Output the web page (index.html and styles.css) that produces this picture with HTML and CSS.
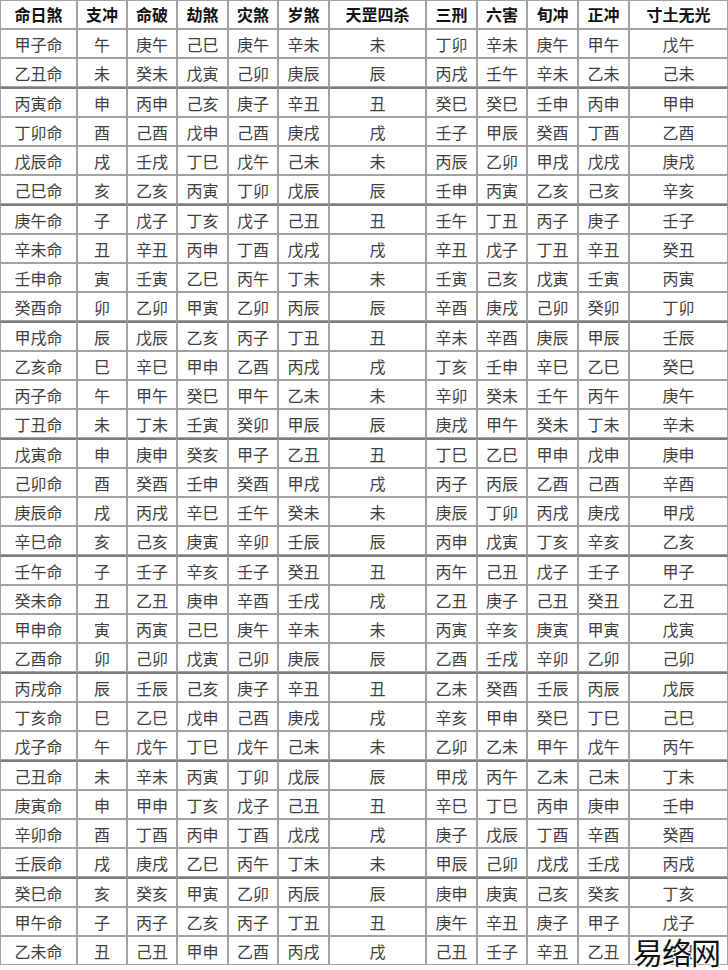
FILE: index.html
```html
<!DOCTYPE html>
<html lang="zh-CN">
<head>
<meta charset="utf-8">
<title>命日煞</title>
<link rel="stylesheet" href="styles.css">
</head>
<body>
<div class="wrap">
<table class="sha">
<colgroup>
<col class="c1"><col class="c2"><col class="c3"><col class="c4"><col class="c5"><col class="c6"><col class="c7"><col class="c8"><col class="c9"><col class="c10"><col class="c11"><col class="c12">
</colgroup>
<thead>
<tr><th>命日煞</th><th>支冲</th><th>命破</th><th>劫煞</th><th>灾煞</th><th>岁煞</th><th>天罡四杀</th><th>三刑</th><th>六害</th><th>旬冲</th><th>正冲</th><th>寸土无光</th></tr>
</thead>
<tbody>
<tr><td>甲子命</td><td>午</td><td>庚午</td><td>己巳</td><td>庚午</td><td>辛未</td><td>未</td><td>丁卯</td><td>辛未</td><td>庚午</td><td>甲午</td><td>戊午</td></tr>
<tr><td>乙丑命</td><td>未</td><td>癸未</td><td>戊寅</td><td>己卯</td><td>庚辰</td><td>辰</td><td>丙戌</td><td>壬午</td><td>辛未</td><td>乙未</td><td>己未</td></tr>
<tr class="sep"><td>丙寅命</td><td>申</td><td>丙申</td><td>己亥</td><td>庚子</td><td>辛丑</td><td>丑</td><td>癸巳</td><td>癸巳</td><td>壬申</td><td>丙申</td><td>甲申</td></tr>
<tr><td>丁卯命</td><td>酉</td><td>己酉</td><td>戊申</td><td>己酉</td><td>庚戌</td><td>戌</td><td>壬子</td><td>甲辰</td><td>癸酉</td><td>丁酉</td><td>乙酉</td></tr>
<tr><td>戊辰命</td><td>戌</td><td>壬戌</td><td>丁巳</td><td>戊午</td><td>己未</td><td>未</td><td>丙辰</td><td>乙卯</td><td>甲戌</td><td>戊戌</td><td>庚戌</td></tr>
<tr><td>己巳命</td><td>亥</td><td>乙亥</td><td>丙寅</td><td>丁卯</td><td>戊辰</td><td>辰</td><td>壬申</td><td>丙寅</td><td>乙亥</td><td>己亥</td><td>辛亥</td></tr>
<tr class="sep"><td>庚午命</td><td>子</td><td>戊子</td><td>丁亥</td><td>戊子</td><td>己丑</td><td>丑</td><td>壬午</td><td>丁丑</td><td>丙子</td><td>庚子</td><td>壬子</td></tr>
<tr><td>辛未命</td><td>丑</td><td>辛丑</td><td>丙申</td><td>丁酉</td><td>戊戌</td><td>戌</td><td>辛丑</td><td>戊子</td><td>丁丑</td><td>辛丑</td><td>癸丑</td></tr>
<tr><td>壬申命</td><td>寅</td><td>壬寅</td><td>乙巳</td><td>丙午</td><td>丁未</td><td>未</td><td>壬寅</td><td>己亥</td><td>戊寅</td><td>壬寅</td><td>丙寅</td></tr>
<tr><td>癸酉命</td><td>卯</td><td>乙卯</td><td>甲寅</td><td>乙卯</td><td>丙辰</td><td>辰</td><td>辛酉</td><td>庚戌</td><td>己卯</td><td>癸卯</td><td>丁卯</td></tr>
<tr class="sep"><td>甲戌命</td><td>辰</td><td>戊辰</td><td>乙亥</td><td>丙子</td><td>丁丑</td><td>丑</td><td>辛未</td><td>辛酉</td><td>庚辰</td><td>甲辰</td><td>壬辰</td></tr>
<tr><td>乙亥命</td><td>巳</td><td>辛巳</td><td>甲申</td><td>乙酉</td><td>丙戌</td><td>戌</td><td>丁亥</td><td>壬申</td><td>辛巳</td><td>乙巳</td><td>癸巳</td></tr>
<tr><td>丙子命</td><td>午</td><td>甲午</td><td>癸巳</td><td>甲午</td><td>乙未</td><td>未</td><td>辛卯</td><td>癸未</td><td>壬午</td><td>丙午</td><td>庚午</td></tr>
<tr><td>丁丑命</td><td>未</td><td>丁未</td><td>壬寅</td><td>癸卯</td><td>甲辰</td><td>辰</td><td>庚戌</td><td>甲午</td><td>癸未</td><td>丁未</td><td>辛未</td></tr>
<tr class="sep"><td>戊寅命</td><td>申</td><td>庚申</td><td>癸亥</td><td>甲子</td><td>乙丑</td><td>丑</td><td>丁巳</td><td>乙巳</td><td>甲申</td><td>戊申</td><td>庚申</td></tr>
<tr><td>己卯命</td><td>酉</td><td>癸酉</td><td>壬申</td><td>癸酉</td><td>甲戌</td><td>戌</td><td>丙子</td><td>丙辰</td><td>乙酉</td><td>己酉</td><td>辛酉</td></tr>
<tr><td>庚辰命</td><td>戌</td><td>丙戌</td><td>辛巳</td><td>壬午</td><td>癸未</td><td>未</td><td>庚辰</td><td>丁卯</td><td>丙戌</td><td>庚戌</td><td>甲戌</td></tr>
<tr><td>辛巳命</td><td>亥</td><td>己亥</td><td>庚寅</td><td>辛卯</td><td>壬辰</td><td>辰</td><td>丙申</td><td>戊寅</td><td>丁亥</td><td>辛亥</td><td>乙亥</td></tr>
<tr class="sep"><td>壬午命</td><td>子</td><td>壬子</td><td>辛亥</td><td>壬子</td><td>癸丑</td><td>丑</td><td>丙午</td><td>己丑</td><td>戊子</td><td>壬子</td><td>甲子</td></tr>
<tr><td>癸未命</td><td>丑</td><td>乙丑</td><td>庚申</td><td>辛酉</td><td>壬戌</td><td>戌</td><td>乙丑</td><td>庚子</td><td>己丑</td><td>癸丑</td><td>乙丑</td></tr>
<tr><td>甲申命</td><td>寅</td><td>丙寅</td><td>己巳</td><td>庚午</td><td>辛未</td><td>未</td><td>丙寅</td><td>辛亥</td><td>庚寅</td><td>甲寅</td><td>戊寅</td></tr>
<tr><td>乙酉命</td><td>卯</td><td>己卯</td><td>戊寅</td><td>己卯</td><td>庚辰</td><td>辰</td><td>乙酉</td><td>壬戌</td><td>辛卯</td><td>乙卯</td><td>己卯</td></tr>
<tr class="sep"><td>丙戌命</td><td>辰</td><td>壬辰</td><td>己亥</td><td>庚子</td><td>辛丑</td><td>丑</td><td>乙未</td><td>癸酉</td><td>壬辰</td><td>丙辰</td><td>戊辰</td></tr>
<tr><td>丁亥命</td><td>巳</td><td>乙巳</td><td>戊申</td><td>己酉</td><td>庚戌</td><td>戌</td><td>辛亥</td><td>甲申</td><td>癸巳</td><td>丁巳</td><td>己巳</td></tr>
<tr><td>戊子命</td><td>午</td><td>戊午</td><td>丁巳</td><td>戊午</td><td>己未</td><td>未</td><td>乙卯</td><td>乙未</td><td>甲午</td><td>戊午</td><td>丙午</td></tr>
<tr class="sep"><td>己丑命</td><td>未</td><td>辛未</td><td>丙寅</td><td>丁卯</td><td>戊辰</td><td>辰</td><td>甲戌</td><td>丙午</td><td>乙未</td><td>己未</td><td>丁未</td></tr>
<tr><td>庚寅命</td><td>申</td><td>甲申</td><td>丁亥</td><td>戊子</td><td>己丑</td><td>丑</td><td>辛巳</td><td>丁巳</td><td>丙申</td><td>庚申</td><td>壬申</td></tr>
<tr><td>辛卯命</td><td>酉</td><td>丁酉</td><td>丙申</td><td>丁酉</td><td>戊戌</td><td>戌</td><td>庚子</td><td>戊辰</td><td>丁酉</td><td>辛酉</td><td>癸酉</td></tr>
<tr><td>壬辰命</td><td>戌</td><td>庚戌</td><td>乙巳</td><td>丙午</td><td>丁未</td><td>未</td><td>甲辰</td><td>己卯</td><td>戊戌</td><td>壬戌</td><td>丙戌</td></tr>
<tr class="sep"><td>癸巳命</td><td>亥</td><td>癸亥</td><td>甲寅</td><td>乙卯</td><td>丙辰</td><td>辰</td><td>庚申</td><td>庚寅</td><td>己亥</td><td>癸亥</td><td>丁亥</td></tr>
<tr><td>甲午命</td><td>子</td><td>丙子</td><td>乙亥</td><td>丙子</td><td>丁丑</td><td>丑</td><td>庚午</td><td>辛丑</td><td>庚子</td><td>甲子</td><td>戊子</td></tr>
<tr><td>乙未命</td><td>丑</td><td>己丑</td><td>甲申</td><td>乙酉</td><td>丙戌</td><td>戌</td><td>己丑</td><td>壬子</td><td>辛丑</td><td>乙丑</td><td>己丑</td></tr>
</tbody>
</table>
<div class="mark">易络网</div>
</div>
</body>
</html>
```
FILE: styles.css
```css
html, body {
  margin: 0;
  padding: 0;
  background: #ffffff;
}
.wrap {
  position: relative;
  width: 728px;
  height: 970px;
  overflow: hidden;
}
.sha {
  width: 728px;
  table-layout: fixed;
  border-collapse: separate;
  border-spacing: 0;
  font-family: "Noto Sans CJK SC", "Noto Sans CJK TC", sans-serif;
  font-size: 16px;
  color: #404040;
}
.c1 { width: 77px; }
.c2 { width: 50px; }
.c3 { width: 50px; }
.c4 { width: 51px; }
.c5 { width: 50px; }
.c6 { width: 51px; }
.c7 { width: 97px; }
.c8 { width: 51px; }
.c9 { width: 50px; }
.c10 { width: 51px; }
.c11 { width: 51px; }
.c12 { width: 99px; }
.sha th,
.sha td {
  padding: 0;
  text-align: center;
  border: 1px solid #a2a2a2;
  white-space: nowrap;
  overflow: hidden;
}
.sha th {
  height: 27px;
  line-height: 27px;
  font-weight: 700;
  color: #111111;
}
.sha td {
  height: 26px;
  line-height: 26px;
  padding-top: 1px;
  font-weight: 400;
}
.sha tr.sep td {
  border-top: 2px solid #7c7c7c;
}
.mark {
  position: absolute;
  right: 8px;
  bottom: 2px;
  font-family: "Noto Sans CJK SC", sans-serif;
  font-size: 30px;
  line-height: 34px;
  font-weight: 400;
  color: #111111;
  letter-spacing: -1px;
  text-shadow: 0 0 2px #fff, 1px 1px 0 #fff, -1px -1px 0 #fff, 1px -1px 0 #fff, -1px 1px 0 #fff;
}
```
